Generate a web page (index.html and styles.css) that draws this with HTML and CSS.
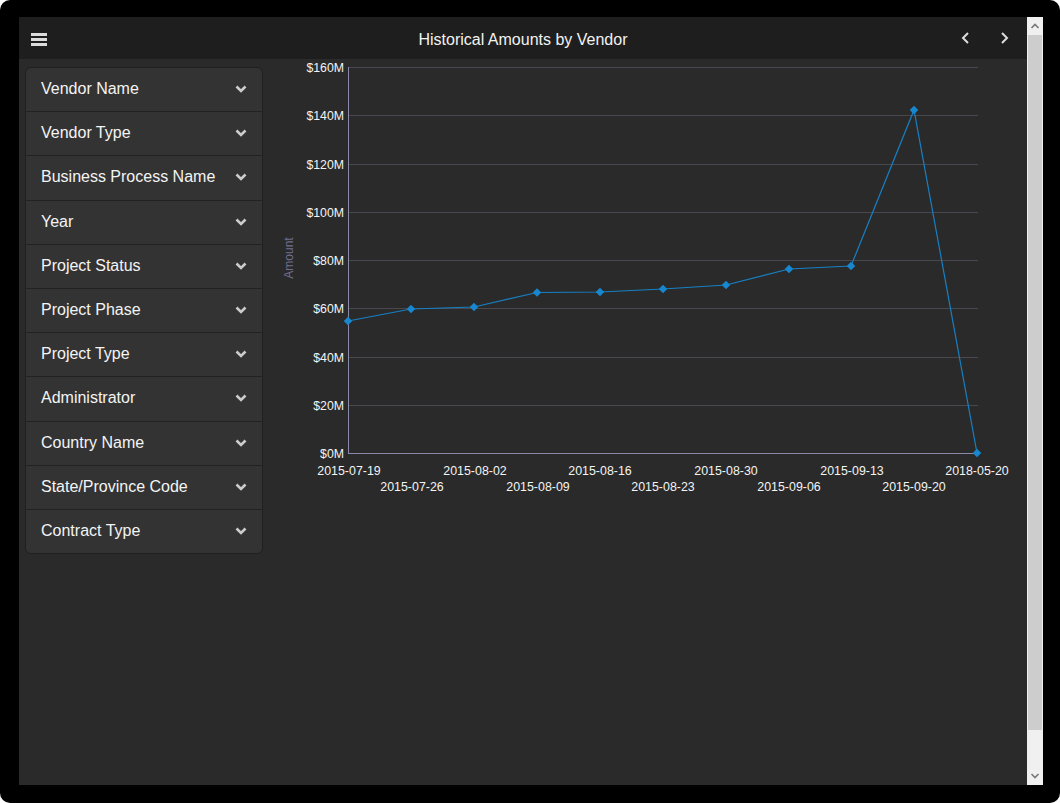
FILE: index.html
```html
<!DOCTYPE html>
<html>
<head>
<meta charset="utf-8">
<link rel="stylesheet" href="styles.css">
</head>
<body>
<div class="frame">
  <div class="window">
    <div class="app">
      <header class="topbar">
        <div class="hamburger"><span></span><span></span><span></span></div>
        <div class="title">Historical Amounts by Vendor</div>
        <div class="navs">
          <svg class="nav" width="12" height="14" viewBox="0 0 12 14"><polyline points="8,2 3,7 8,12" fill="none" stroke="#ddd" stroke-width="2"/></svg>
          <svg class="nav" width="12" height="14" viewBox="0 0 12 14"><polyline points="4,2 9,7 4,12" fill="none" stroke="#ddd" stroke-width="2"/></svg>
        </div>
      </header>
      <div class="content">
        <aside class="filters">
          <div class="item"><span>Vendor Name</span><svg class="chev" width="12" height="8" viewBox="0 0 12 8"><polyline points="1.5,1.5 6,6 10.5,1.5" fill="none" stroke="#ccc" stroke-width="2.6"/></svg></div>
          <div class="item"><span>Vendor Type</span><svg class="chev" width="12" height="8" viewBox="0 0 12 8"><polyline points="1.5,1.5 6,6 10.5,1.5" fill="none" stroke="#ccc" stroke-width="2.6"/></svg></div>
          <div class="item"><span>Business Process Name</span><svg class="chev" width="12" height="8" viewBox="0 0 12 8"><polyline points="1.5,1.5 6,6 10.5,1.5" fill="none" stroke="#ccc" stroke-width="2.6"/></svg></div>
          <div class="item"><span>Year</span><svg class="chev" width="12" height="8" viewBox="0 0 12 8"><polyline points="1.5,1.5 6,6 10.5,1.5" fill="none" stroke="#ccc" stroke-width="2.6"/></svg></div>
          <div class="item"><span>Project Status</span><svg class="chev" width="12" height="8" viewBox="0 0 12 8"><polyline points="1.5,1.5 6,6 10.5,1.5" fill="none" stroke="#ccc" stroke-width="2.6"/></svg></div>
          <div class="item"><span>Project Phase</span><svg class="chev" width="12" height="8" viewBox="0 0 12 8"><polyline points="1.5,1.5 6,6 10.5,1.5" fill="none" stroke="#ccc" stroke-width="2.6"/></svg></div>
          <div class="item"><span>Project Type</span><svg class="chev" width="12" height="8" viewBox="0 0 12 8"><polyline points="1.5,1.5 6,6 10.5,1.5" fill="none" stroke="#ccc" stroke-width="2.6"/></svg></div>
          <div class="item"><span>Administrator</span><svg class="chev" width="12" height="8" viewBox="0 0 12 8"><polyline points="1.5,1.5 6,6 10.5,1.5" fill="none" stroke="#ccc" stroke-width="2.6"/></svg></div>
          <div class="item"><span>Country Name</span><svg class="chev" width="12" height="8" viewBox="0 0 12 8"><polyline points="1.5,1.5 6,6 10.5,1.5" fill="none" stroke="#ccc" stroke-width="2.6"/></svg></div>
          <div class="item"><span>State/Province Code</span><svg class="chev" width="12" height="8" viewBox="0 0 12 8"><polyline points="1.5,1.5 6,6 10.5,1.5" fill="none" stroke="#ccc" stroke-width="2.6"/></svg></div>
          <div class="item"><span>Contract Type</span><svg class="chev" width="12" height="8" viewBox="0 0 12 8"><polyline points="1.5,1.5 6,6 10.5,1.5" fill="none" stroke="#ccc" stroke-width="2.6"/></svg></div>
        </aside>
        <div class="chart">
          <svg width="764" height="460" viewBox="263 59 764 460">
            <g class="grid">
              <line x1="348" y1="67.5" x2="978" y2="67.5"/>
              <line x1="348" y1="115.5" x2="978" y2="115.5"/>
              <line x1="348" y1="164.5" x2="978" y2="164.5"/>
              <line x1="348" y1="212.5" x2="978" y2="212.5"/>
              <line x1="348" y1="260.5" x2="978" y2="260.5"/>
              <line x1="348" y1="308.5" x2="978" y2="308.5"/>
              <line x1="348" y1="357.5" x2="978" y2="357.5"/>
              <line x1="348" y1="405.5" x2="978" y2="405.5"/>
            </g>
            <line class="axis" x1="348.5" y1="67" x2="348.5" y2="454"/>
            <line class="axis" x1="348" y1="453.5" x2="978" y2="453.5"/>
            <g class="ylab">
              <text x="344" y="72">$160M</text>
              <text x="344" y="120">$140M</text>
              <text x="344" y="169">$120M</text>
              <text x="344" y="217">$100M</text>
              <text x="344" y="265">$80M</text>
              <text x="344" y="313">$60M</text>
              <text x="344" y="362">$40M</text>
              <text x="344" y="410">$20M</text>
              <text x="344" y="458">$0M</text>
            </g>
            <text class="atitle" transform="translate(293 258) rotate(-90)">Amount</text>
            <g class="xlab">
              <text x="349" y="475">2015-07-19</text>
              <text x="412" y="491">2015-07-26</text>
              <text x="475" y="475">2015-08-02</text>
              <text x="538" y="491">2015-08-09</text>
              <text x="600" y="475">2015-08-16</text>
              <text x="663" y="491">2015-08-23</text>
              <text x="726" y="475">2015-08-30</text>
              <text x="789" y="491">2015-09-06</text>
              <text x="852" y="475">2015-09-13</text>
              <text x="914" y="491">2015-09-20</text>
              <text x="977" y="475">2018-05-20</text>
            </g>
            <polyline class="series" points="348,321 411,309 474,307 537,292.5 600,292 663,289 726,285 789,269 851,266 914,110 977,453"/>
            <g class="pts">
              <rect x="345" y="318" width="6" height="6" transform="rotate(45 348 321)"/>
              <rect x="408" y="306" width="6" height="6" transform="rotate(45 411 309)"/>
              <rect x="471" y="304" width="6" height="6" transform="rotate(45 474 307)"/>
              <rect x="534" y="289.5" width="6" height="6" transform="rotate(45 537 292.5)"/>
              <rect x="597" y="289" width="6" height="6" transform="rotate(45 600 292)"/>
              <rect x="660" y="286" width="6" height="6" transform="rotate(45 663 289)"/>
              <rect x="723" y="282" width="6" height="6" transform="rotate(45 726 285)"/>
              <rect x="786" y="266" width="6" height="6" transform="rotate(45 789 269)"/>
              <rect x="848" y="263" width="6" height="6" transform="rotate(45 851 266)"/>
              <rect x="911" y="107" width="6" height="6" transform="rotate(45 914 110)"/>
              <rect x="974" y="450" width="6" height="6" transform="rotate(45 977 453)"/>
            </g>
          </svg>
        </div>
      </div>
    </div>
    <div class="scrollbar">
      <div class="sb-btn"><svg width="10" height="6" viewBox="0 0 10 6"><polyline points="1.5,5 5,1.5 8.5,5" fill="none" stroke="#777" stroke-width="1.6"/></svg></div>
      <div class="sb-thumb"></div>
      <div class="sb-track"></div>
      <div class="sb-btn"><svg width="10" height="6" viewBox="0 0 10 6"><polyline points="1.5,1 5,4.5 8.5,1" fill="none" stroke="#777" stroke-width="1.6"/></svg></div>
    </div>
  </div>
</div>
</body>
</html>
```

FILE: styles.css
```css
html, body {
  margin: 0;
  padding: 0;
  background: #ffffff;
}
body {
  width: 1060px;
  height: 803px;
  overflow: hidden;
  font-family: "Liberation Sans", Arial, sans-serif;
}
.frame {
  width: 1060px;
  height: 803px;
  box-sizing: border-box;
  background: #000;
  border-radius: 10px;
  padding: 17px 17px 18px 19px;
}
.window {
  display: flex;
  width: 1024px;
  height: 768px;
}
.app {
  flex: 1;
  display: flex;
  flex-direction: column;
  background: #2a2a2a;
}
.topbar {
  height: 42px;
  flex: none;
  background: #1e1e1e;
  display: grid;
  grid-template-columns: 1fr auto 1fr;
  align-items: center;
}
.hamburger {
  margin-left: 12px;
  width: 16px;
  display: flex;
  flex-direction: column;
  gap: 2px;
  margin-top: 2px;
}
.hamburger span {
  display: block;
  height: 3px;
  background: #dcdcdc;
}
.title {
  text-align: center;
  color: #f2f2f2;
  font-size: 16px;
  padding-top: 4px;
}
.navs {
  display: flex;
  justify-self: end;
  gap: 26px;
  margin-right: 17px;
  align-items: center;
}
.nav { display: block; }
.content {
  flex: 1;
  display: flex;
  align-items: flex-start;
}
.filters {
  margin: 8px 0 0 6px;
  width: 238px;
  background: #333333;
  border: 1px solid #202020;
  border-radius: 6px;
  overflow: hidden;
  box-sizing: border-box;
}
.item {
  height: 44.2px;
  box-sizing: border-box;
  display: flex;
  align-items: center;
  justify-content: space-between;
  padding: 0 15px 1px 15px;
  color: #f4f4f4;
  font-size: 16px;
  border-top: 1px solid #222;
}
.item:first-child { border-top: none; height: 43.2px; }
.chev { display: block; }
.chart svg { display: block; }
.grid line {
  stroke: #48484f;
  stroke-width: 1;
}
.axis {
  stroke: #8a8aa8;
  stroke-width: 1;
}
.ylab text {
  fill: #f4f4f4;
  font-size: 12.3px;
  text-anchor: end;
  font-family: "Liberation Sans", Arial, sans-serif;
}
.xlab text {
  fill: #f4f4f4;
  font-size: 12.4px;
  text-anchor: middle;
  font-family: "Liberation Sans", Arial, sans-serif;
}
.atitle {
  fill: #6f6f90;
  font-size: 12px;
  text-anchor: middle;
  font-family: "Liberation Sans", Arial, sans-serif;
}
.series {
  fill: none;
  stroke: #1780c4;
  stroke-width: 1.2;
}
.pts rect { fill: #1788d0; }
.scrollbar {
  width: 16px;
  flex: none;
  display: flex;
  flex-direction: column;
  background: #f0f0f0;
}
.sb-btn {
  height: 18px;
  display: flex;
  align-items: center;
  justify-content: center;
  flex: none;
}
.sb-thumb {
  height: 695px;
  background: #cdcdcd;
  margin: 0 1px;
  flex: none;
}
.sb-track { flex: 1; }
```
